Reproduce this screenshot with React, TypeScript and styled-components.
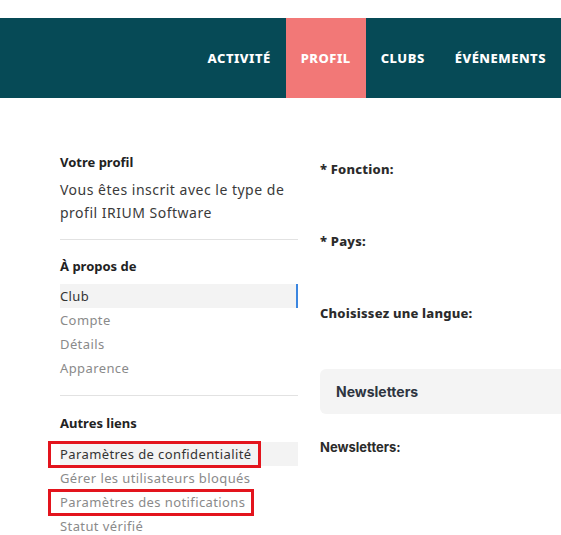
import styled, { createGlobalStyle } from "styled-components";

const GlobalStyle = createGlobalStyle`
  * { box-sizing: border-box; }
  body {
    margin: 0;
    background: #fff;
    font-family: "Noto Sans", "Open Sans", sans-serif;
    color: #2b2b2b;
  }
`;

const navItems = ["Activité", "Profil", "Clubs", "Événements"];

const aboutLinks = ["Club", "Compte", "Détails", "Apparence"];

const otherLinks: { label: string; marked?: boolean }[] = [
  { label: "Paramètres de confidentialité", marked: true },
  { label: "Gérer les utilisateurs bloqués" },
  { label: "Paramètres des notifications", marked: true },
  { label: "Statut vérifié" },
];

export default function App() {
  return (
    <>
      <GlobalStyle />
      <Page>
        <Header>
          <Nav>
            {navItems.map((item) => (
              <NavItem key={item} $active={item === "Profil"}>
                {item}
              </NavItem>
            ))}
          </Nav>
        </Header>

        <Content>
          <Sidebar>
            <SideTitle>Votre profil</SideTitle>
            <SideText>Vous êtes inscrit avec le type de profil IRIUM Software</SideText>
            <Divider />

            <SideTitle>À propos de</SideTitle>
            <LinkList $gap={8}>
              {aboutLinks.map((link) => (
                <SideLink key={link} $current={link === "Club"} $selected={link === "Club"}>
                  {link}
                </SideLink>
              ))}
            </LinkList>
            <Divider $after={17} />

            <SideTitle>Autres liens</SideTitle>
            <LinkList $gap={9}>
              {otherLinks.map((link, i) => (
                <SideLink key={link.label} $current={i === 0}>
                  {link.marked ? <Marked>{link.label}</Marked> : link.label}
                </SideLink>
              ))}
            </LinkList>
          </Sidebar>

          <Main>
            <Field>
              <FieldLabel>* Fonction:</FieldLabel>
            </Field>
            <Field>
              <FieldLabel>* Pays:</FieldLabel>
            </Field>
            <Field $short>
              <FieldLabel>Choisissez une langue:</FieldLabel>
            </Field>
            <Card>
              <CardTitle>Newsletters</CardTitle>
            </Card>
            <PlainLabel>Newsletters:</PlainLabel>
          </Main>
        </Content>
      </Page>
    </>
  );
}

const Page = styled.div`
  padding-top: 18px;
  min-height: 535px;
  overflow: hidden;
`;

const Header = styled.header`
  height: 80px;
  background: #064a56;
  display: flex;
  justify-content: flex-end;
`;

const Nav = styled.nav`
  display: flex;
  height: 100%;
`;

const NavItem = styled.a<{ $active?: boolean }>`
  display: flex;
  align-items: center;
  padding: 0 15px;
  height: 100%;
  color: #fff;
  font-weight: 800;
  font-size: 13px;
  letter-spacing: 0.5px;
  text-transform: uppercase;
  background: ${(p) => (p.$active ? "#f27877" : "transparent")};
  cursor: pointer;
`;

const Content = styled.div`
  display: grid;
  grid-template-columns: 238px 1fr;
  column-gap: 22px;
  padding-left: 60px;
  align-items: start;
`;

const Sidebar = styled.aside`
  padding-top: 54px;
  display: flex;
  flex-direction: column;
`;

const SideTitle = styled.h4`
  margin: 0;
  font-size: 13px;
  line-height: 20px;
  font-weight: 700;
  color: #222;
`;

const SideText = styled.p`
  margin: 6px 0 0;
  font-size: 14px;
  line-height: 23px;
  letter-spacing: 0.5px;
  color: #3a3a3a;
`;

const Divider = styled.hr<{ $after?: number }>`
  border: none;
  border-top: 1px solid #e2e2e2;
  margin: 15px 0 ${(p) => p.$after ?? 16}px;
  height: 0;
  width: 100%;
`;

const LinkList = styled.ul<{ $gap: number }>`
  list-style: none;
  margin: ${(p) => p.$gap}px 0 0;
  padding: 0;
`;

const SideLink = styled.li<{ $current?: boolean; $selected?: boolean }>`
  height: 24px;
  line-height: 24px;
  font-size: 13px;
  letter-spacing: 0.4px;
  color: ${(p) => (p.$current ? "#333" : "#8a8a8a")};
  background: ${(p) => (p.$current ? "#f3f3f3" : "transparent")};
  border-right: 2px solid ${(p) => (p.$selected ? "#3b86e0" : "transparent")};
  white-space: nowrap;
  cursor: pointer;
`;

const Marked = styled.span`
  display: inline-block;
  line-height: 21px;
  padding: 0 6px 0 9px;
  margin-left: -9px;
  outline: 3px solid #e3141d;
  outline-offset: 0;
`;

const Main = styled.main`
  padding-top: 61px;
  display: flex;
  flex-direction: column;
`;

const Field = styled.div<{ $short?: boolean }>`
  height: ${(p) => (p.$short ? "66px" : "72px")};
`;

const FieldLabel = styled.label`
  display: block;
  font-size: 13px;
  line-height: 20px;
  font-weight: 800;
  letter-spacing: 0.2px;
  color: #2b2b2b;
`;

const Card = styled.section`
  height: 45px;
  margin-right: -20px;
  background: #f4f4f4;
  border-radius: 6px;
  display: flex;
  align-items: center;
  padding: 0 16px;
`;

const CardTitle = styled.h3`
  margin: 0;
  font-family: Inter, "Noto Sans", sans-serif;
  font-size: 14px;
  line-height: 20px;
  font-weight: 700;
  color: #2e3440;
`;

const PlainLabel = styled.label`
  margin-top: 23px;
  display: block;
  font-family: Inter, "Noto Sans", sans-serif;
  font-size: 13px;
  line-height: 20px;
  font-weight: 700;
  color: #2b2b2b;
`;
